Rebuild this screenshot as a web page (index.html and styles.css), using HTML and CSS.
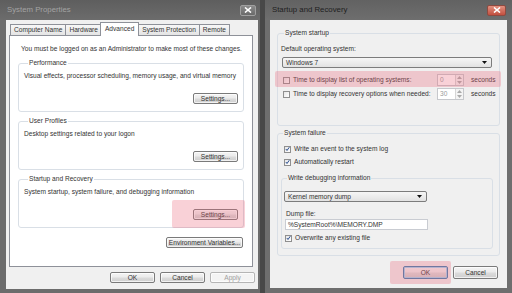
FILE: index.html
```html
<!DOCTYPE html>
<html>
<head>
<meta charset="utf-8">
<title>System Properties</title>
<link rel="stylesheet" href="styles.css">
</head>
<body>
<div class="desk">
  <section class="win win-left">
    <header class="titlebar">
      <span class="title title-inactive">System Properties</span>
      <span class="close close-gray"><svg width="8" height="6" viewBox="0 0 8 6"><path d="M1 0.5 L7 5.5 M7 0.5 L1 5.5" stroke="#fff" stroke-width="1.6"/></svg></span>
    </header>
    <div class="client client-left">
      <nav class="tabs">
        <span class="tab">Computer Name</span>
        <span class="tab">Hardware</span>
        <span class="tab tab-active">Advanced</span>
        <span class="tab">System Protection</span>
        <span class="tab">Remote</span>
      </nav>
      <div class="panel">
        <p class="note">You must be logged on as an Administrator to make most of these changes.</p>
        <fieldset class="group">
          <legend>Performance</legend>
          <p class="desc">Visual effects, processor scheduling, memory usage, and virtual memory</p>
          <div class="actions"><button class="btn btn-settings">Settings...</button></div>
        </fieldset>
        <fieldset class="group">
          <legend>User Profiles</legend>
          <p class="desc">Desktop settings related to your logon</p>
          <div class="actions"><button class="btn btn-settings">Settings...</button></div>
        </fieldset>
        <fieldset class="group">
          <legend>Startup and Recovery</legend>
          <p class="desc">System startup, system failure, and debugging information</p>
          <div class="actions"><span class="hl hl-settings"><button class="btn btn-settings">Settings...</button></span></div>
        </fieldset>
        <div class="env-row"><button class="btn btn-env">Environment Variables...</button></div>
      </div>
      <div class="footer footer-left">
        <button class="btn btn-foot">OK</button>
        <button class="btn btn-foot">Cancel</button>
        <button class="btn btn-foot btn-disabled">Apply</button>
      </div>
    </div>
  </section>

  <section class="win win-right">
    <header class="titlebar">
      <span class="title title-active">Startup and Recovery</span>
      <span class="close close-red"><svg width="8" height="6" viewBox="0 0 8 6"><path d="M1 0.5 L7 5.5 M7 0.5 L1 5.5" stroke="#fff" stroke-width="1.6"/></svg></span>
    </header>
    <div class="client client-right">
      <fieldset class="rgroup rgroup-startup">
        <legend>System startup</legend>
        <p class="label">Default operating system:</p>
        <div class="combo combo-os"><span>Windows 7</span><svg width="5" height="3" viewBox="0 0 5 3"><path d="M0 0 H5 L2.5 3 Z" fill="#111"/></svg></div>
        <div class="hl hl-row">
          <div class="trow">
            <span class="cb"></span>
            <span class="tlabel">Time to display list of operating systems:</span>
            <span class="spin"><span class="spin-val">0</span><span class="spin-btns"><svg width="5" height="3" viewBox="0 0 5 3"><path d="M0 3 H5 L2.5 0 Z" fill="#aaa"/></svg><svg width="5" height="3" viewBox="0 0 5 3"><path d="M0 0 H5 L2.5 3 Z" fill="#aaa"/></svg></span></span>
            <span class="secs">seconds</span>
          </div>
        </div>
        <div class="trow trow-2">
          <span class="cb"></span>
          <span class="tlabel">Time to display recovery options when needed:</span>
          <span class="spin"><span class="spin-val">30</span><span class="spin-btns"><svg width="5" height="3" viewBox="0 0 5 3"><path d="M0 3 H5 L2.5 0 Z" fill="#aaa"/></svg><svg width="5" height="3" viewBox="0 0 5 3"><path d="M0 0 H5 L2.5 3 Z" fill="#aaa"/></svg></span></span>
          <span class="secs">seconds</span>
        </div>
      </fieldset>
      <fieldset class="rgroup rgroup-failure">
        <legend>System failure</legend>
        <div class="crow"><span class="cb cb-on"><svg width="6" height="6" viewBox="0 0 6 6"><path d="M1 3 L2.4 4.8 L5.2 0.8" fill="none" stroke="#2c4f8f" stroke-width="1.2"/></svg></span><span>Write an event to the system log</span></div>
        <div class="crow crow-2"><span class="cb cb-on"><svg width="6" height="6" viewBox="0 0 6 6"><path d="M1 3 L2.4 4.8 L5.2 0.8" fill="none" stroke="#2c4f8f" stroke-width="1.2"/></svg></span><span>Automatically restart</span></div>
        <fieldset class="igroup">
          <legend>Write debugging information</legend>
          <div class="combo combo-dump"><span>Kernel memory dump</span><svg width="5" height="3" viewBox="0 0 5 3"><path d="M0 0 H5 L2.5 3 Z" fill="#111"/></svg></div>
          <p class="label label-dump">Dump file:</p>
          <div class="textbox">%SystemRoot%\MEMORY.DMP</div>
          <div class="crow crow-over"><span class="cb cb-on"><svg width="6" height="6" viewBox="0 0 6 6"><path d="M1 3 L2.4 4.8 L5.2 0.8" fill="none" stroke="#2c4f8f" stroke-width="1.2"/></svg></span><span>Overwrite any existing file</span></div>
        </fieldset>
      </fieldset>
      <div class="footer footer-right">
        <span class="hl hl-ok"><button class="btn btn-rfoot btn-default">OK</button></span>
        <button class="btn btn-rfoot">Cancel</button>
      </div>
    </div>
  </section>
</div>
</body>
</html>
```

FILE: styles.css
```css
* { box-sizing: border-box; }
html, body { margin: 0; padding: 0; }
body {
  width: 512px;
  height: 293px;
  overflow: hidden;
  background: #484848;
  font-family: "Liberation Sans", Arial, sans-serif;
  font-size: 6.6px;
  line-height: 8px;
  color: #333;
}
p { margin: 0; }
button { font: inherit; color: inherit; padding: 0; margin: 0; }

.desk { display: flex; gap: 5px; height: 293px; }

.win { display: flex; flex-direction: column; background: #6c6c6c; height: 293px; }
.win-left { width: 260px; padding: 0 2px 0 6px; background: linear-gradient(#5e5e5e, #6c6c6c 20px); }
.win-right { width: 247px; padding: 0 5px; background: linear-gradient(#626262, #6e6e6e 20px); }

.titlebar { height: 20px; display: flex; align-items: center; justify-content: space-between; }
.title { font-size: 7.8px; }
.title-inactive { color: #a3a3a3; margin-left: 1px; }
.title-active { color: #1e1e1e; margin-left: 2px; }

.close { display: flex; align-items: center; justify-content: center; height: 11px; border-radius: 2px; }
.close-gray { width: 16px; margin-right: 2px; background: linear-gradient(#8a8a8a, #6a6a6a); border: 1px solid #a0a0a0; }
.close-red { width: 19px; margin-right: 1px; background: linear-gradient(#e3907f, #c24f3f); border: 1px solid #8e4a40; }

.client { background: #f0f0f0; display: flex; flex-direction: column; }
.client-left { height: 269px; padding: 2px 2px 0 3px; }
.client-right { height: 268px; padding: 9px 7px 0 7px; }

/* tabs */
.tabs { display: flex; align-items: flex-end; height: 13px; padding-left: 1px; position: relative; z-index: 1; }
.tab {
  height: 11px;
  padding: 0 3px;
  border: 1px solid #8e9199;
  border-bottom: none;
  margin-right: -1px;
  background: linear-gradient(#f7f7f7, #e4e4e4);
  line-height: 10px;
  white-space: nowrap;
}
.tab-active {
  height: 14px;
  margin: 0 -1px -1px -1px;
  background: #fff;
  position: relative;
  z-index: 2;
  line-height: 11px;
  padding: 0 4px;
}

.panel {
  height: 232px;
  margin-right: 3px;
  background: #fff;
  border: 1px solid #8e9199;
  padding: 9px 8px 0 8px;
  display: flex;
  flex-direction: column;
}
.note { padding-left: 3px; height: 8px; white-space: nowrap; }

.group {
  margin: 6px 0 0 0;
  padding: 5px 5px 7px 5px;
  border: 1px solid #d9dfe6;
  border-radius: 3px;
  min-width: 0;
}
.group + .group { margin-top: 5px; }
.group legend { padding: 0 1px; margin-left: 4px; line-height: 8px; height: 8px; }
.desc { height: 8px; white-space: nowrap; }
.actions { display: flex; justify-content: flex-end; margin-top: 13px; }

.btn {
  display: flex;
  align-items: center;
  justify-content: center;
  border: 1px solid #7a7a7a;
  border-radius: 2px;
  background: linear-gradient(#f4f4f4 0%, #ebebeb 48%, #dcdcdc 52%, #cfcfcf 100%);
  box-shadow: inset 0 0 0 1px rgba(255,255,255,0.7);
  white-space: nowrap;
  line-height: 8px;
}
.btn-settings { width: 45px; height: 11px; }
.env-row { display: flex; justify-content: flex-end; margin-top: 9px; padding-right: 1px; }
.btn-env { width: 77px; height: 11px; }

.footer { display: flex; justify-content: flex-end; }
.footer-left { gap: 5px; margin-top: 5px; padding-right: 1px; }
.btn-foot { width: 45px; height: 11px; }
.btn-disabled { color: #a0a0a0; border-color: #b5b5b5; background: #f4f4f4; }

/* highlight overlays */
.hl { position: relative; display: block; }
.hl::after {
  content: "";
  position: absolute;
  background: rgba(236, 104, 124, 0.3);
  border-radius: 2px;
  pointer-events: none;
}
.hl-settings::after { left: -21px; right: -7px; top: -9px; bottom: -8px; }
.hl-row::after { left: -7px; right: -6px; top: -3px; bottom: -1px; }
.hl-ok::after { left: -13px; right: -3px; top: -5px; bottom: -5px; }

/* right dialog */
.rgroup {
  margin: 0;
  border: 1px solid #d9dfe6;
  border-radius: 3px;
  min-width: 0;
}
.rgroup legend { padding: 0 1px; margin-left: 2px; line-height: 8px; height: 8px; }
.rgroup-startup { padding: 8px 7px 25px 4px; }
.rgroup-failure { margin-top: 3px; padding: 8px 6px 6px 3px; }

.label { height: 8px; margin-left: -1px; }
.combo {
  display: flex;
  align-items: center;
  justify-content: space-between;
  height: 11px;
  padding: 0 4px 0 3px;
  border: 1px solid #7c7c7c;
  border-radius: 2px;
  background: linear-gradient(#f6f6f6, #e2e2e2);
}
.combo-os { margin-top: 4px; }

.hl-row { margin-top: 6px; margin-right: -3px; }
.trow { display: flex; align-items: center; height: 12px; padding-left: 1px; }
.trow-2 { margin-top: 2px; margin-right: -3px; }
.tlabel { flex: 1; margin-left: 3px; white-space: nowrap; }
.cb {
  width: 7px;
  height: 7px;
  flex: none;
  border: 1px solid #8f8f8f;
  background: linear-gradient(135deg, #e6e6e6, #ffffff);
  display: flex;
  align-items: center;
  justify-content: center;
}
.spin {
  display: flex;
  width: 27px;
  height: 12px;
  border: 1px solid #c6c8cc;
  background: #fff;
}
.spin-val { flex: 1; color: #9a9a9a; padding-left: 2px; line-height: 10px; }
.spin-btns { width: 8px; display: flex; flex-direction: column; justify-content: space-around; align-items: center; border-left: 1px solid #d6d6d6; background: #f4f4f4; }
.secs { width: 24px; margin-left: 7px; white-space: nowrap; }

.crow { display: flex; align-items: center; gap: 3px; height: 8px; padding-left: 3px; }
.crow-2 { margin-top: 5px; }
.crow-over { margin-top: 4px; padding-left: 1px; }

.igroup {
  margin: 8px 0 0 0;
  padding: 9px 6px 6px 2px;
  border: 1px solid #d9dfe6;
  border-radius: 3px;
  min-width: 0;
}
.igroup legend { padding: 0 1px; margin-left: 3px; line-height: 8px; height: 8px; }
.combo-dump { width: 143px; }
.label-dump { margin: 8px 0 0 2px; }
.textbox {
  width: 143px;
  height: 11px;
  margin: 1px 0 0 1px;
  border: 1px solid #c9ccd2;
  background: #fff;
  padding-left: 2px;
  line-height: 9px;
}

.footer-right { gap: 5px; margin-top: 10px; padding-right: 2px; align-items: center; }
.btn-rfoot { width: 45px; height: 13px; }
.btn-default { border-color: #3c7fb1; box-shadow: inset 0 0 0 1px #9fd4f2; }
```
